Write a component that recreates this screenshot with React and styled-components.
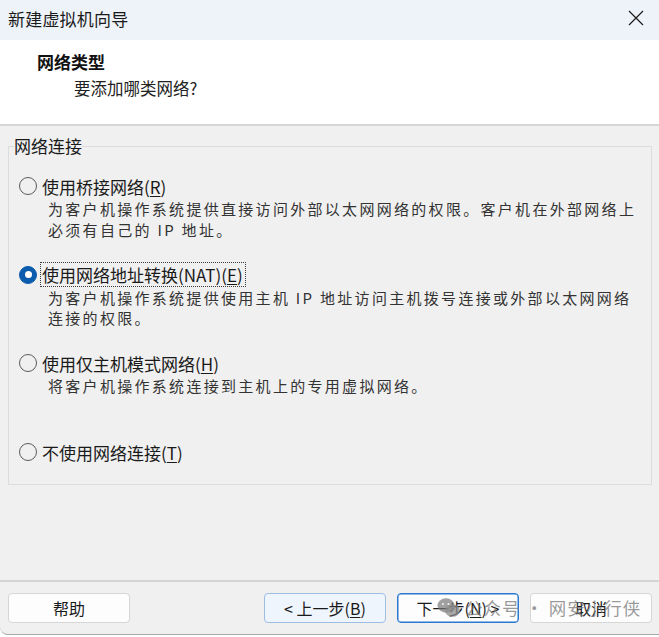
import React from "react"
import styled, { createGlobalStyle } from "styled-components"

const GlobalStyle = createGlobalStyle`
  html, body {
    margin: 0;
    padding: 0;
    background: #ffffff;
  }
  body {
    font-family: "Noto Sans CJK SC", "Noto Sans", "Liberation Sans", sans-serif;
    color: #1a1a1a;
  }
`

const Window = styled.div`
  position: relative;
  width: 659px;
  height: 635px;
  box-sizing: border-box;
  display: flex;
  flex-direction: column;
  background: #f0f0f0;
  border-bottom: 1px solid #a8a8a8;
  border-bottom-left-radius: 8px;
  overflow: hidden;
`

const TitleBar = styled.div`
  height: 40px;
  flex-shrink: 0;
  display: flex;
  align-items: center;
  justify-content: space-between;
  background: #eef2f9;
  padding-left: 8px;
`

const Title = styled.div`
  font-size: 17px;
  color: #1a1a1a;
  letter-spacing: 0.2px;
  margin-top: -4px;
`

const CloseButton = styled.div`
  width: 46px;
  height: 36px;
  display: flex;
  align-items: center;
  justify-content: center;
  margin-top: -4px;
`

const Header = styled.div`
  height: 86px;
  flex-shrink: 0;
  box-sizing: border-box;
  background: #ffffff;
  padding: 11px 0 0 37px;
  border-bottom: 2px solid #d6d6d6;
`

const HeaderTitle = styled.div`
  font-size: 17px;
  font-weight: 700;
  line-height: 22px;
  color: #111;
`

const HeaderSub = styled.div`
  font-size: 16.5px;
  line-height: 22px;
  margin: 4px 0 0 37px;
  color: #222;
`

const Body = styled.div`
  flex: 1;
  padding: 11px 7px 0 8px;
`

const GroupBox = styled.fieldset`
  margin: 0;
  height: 348px;
  box-sizing: border-box;
  border: 1px solid #dcdcdc;
  padding: 0 0 0 10px;
`

const Legend = styled.legend`
  padding: 0;
  margin-left: -5px;
  font-size: 17px;
  line-height: 18px;
  color: #1a1a1a;
`

const OptionList = styled.div`
  display: grid;
  grid-auto-rows: 88.7px;
  margin-top: 19px;
`

const Option = styled.div`
  display: flex;
  flex-direction: column;
`

const OptionRow = styled.label`
  display: flex;
  align-items: center;
  height: 24px;
  gap: 5px;
`

const Radio = styled.span`
  width: 18px;
  height: 18px;
  box-sizing: border-box;
  border-radius: 50%;
  flex-shrink: 0;
  display: flex;
  align-items: center;
  justify-content: center;
  border: 1px solid ${p => (p.$checked ? "#0b5cad" : "#5c5c5c")};
  background: ${p => (p.$checked ? "#0b5cad" : "transparent")};

  &::after {
    content: "";
    width: 7px;
    height: 7px;
    border-radius: 50%;
    background: #ffffff;
    display: ${p => (p.$checked ? "block" : "none")};
  }
`

const OptionLabel = styled.span`
  font-size: 17px;
  line-height: 23px;
  color: #1a1a1a;
  padding: 0 2px 0 1px;
  margin-left: -2px;
  border: 1px dotted ${p => (p.$focused ? "#3a3a3a" : "transparent")};
`

const Key = styled.span`
  text-decoration: underline;
  text-underline-offset: 2px;
`

const Description = styled.div`
  margin: 1px 0 0 29px;
  font-size: 15px;
  line-height: 20.5px;
  letter-spacing: 2.3px;
  color: #333;
  max-width: 600px;
`

const Footer = styled.div`
  height: 54px;
  flex-shrink: 0;
  box-sizing: border-box;
  border-top: 2px solid #d4d4d4;
  padding: 11px 7px 0 8px;
  display: flex;
  justify-content: space-between;
`

const ButtonGroup = styled.div`
  display: flex;
  gap: 11px;
`

const Button = styled.div`
  width: 122px;
  height: 30px;
  box-sizing: border-box;
  border-radius: 4px;
  display: flex;
  align-items: center;
  justify-content: center;
  font-size: 16px;
  color: #1a1a1a;
  background: ${p => (p.$variant === "hover" ? "#eef5fd" : "#fdfdfd")};
  border: 1px solid
    ${p =>
      p.$variant === "default"
        ? "#2a78cf"
        : p.$variant === "hover"
        ? "#9cbde3"
        : "#d6d6d6"};
  box-shadow: ${p => (p.$variant === "default" ? "inset 0 0 0 0.5px #2a78cf" : "none")};
`

const Watermark = styled.div`
  position: absolute;
  left: 437px;
  top: 595px;
  display: flex;
  align-items: center;
  gap: 4px;
  font-size: 17.5px;
  color: rgba(120, 120, 120, 0.75);
  letter-spacing: 1px;
  pointer-events: none;
`

const options = [
  {
    label: ["使用桥接网络(", "R", ")"],
    desc: "为客户机操作系统提供直接访问外部以太网网络的权限。客户机在外部网络上必须有自己的 IP 地址。",
  },
  {
    label: ["使用网络地址转换(NAT)(", "E", ")"],
    desc: "为客户机操作系统提供使用主机 IP 地址访问主机拨号连接或外部以太网网络连接的权限。",
    checked: true,
  },
  {
    label: ["使用仅主机模式网络(", "H", ")"],
    desc: "将客户机操作系统连接到主机上的专用虚拟网络。",
  },
  {
    label: ["不使用网络连接(", "T", ")"],
  },
]

function CloseIcon() {
  return (
    <svg width="16" height="16" viewBox="0 0 16 16">
      <path d="M1 1 L15 15 M15 1 L1 15" stroke="#1a1a1a" strokeWidth="1.2" />
    </svg>
  )
}

function WeChatIcon() {
  return (
    <svg width="24" height="22" viewBox="0 0 24 22" fill="rgba(120,120,120,0.7)">
      <ellipse cx="9" cy="8.5" rx="8.5" ry="7.2" />
      <ellipse cx="15.5" cy="13.5" rx="7.5" ry="6.3" fill="rgba(140,140,140,0.75)" />
      <circle cx="6" cy="7" r="1.1" fill="#f0f0f0" />
      <circle cx="11.5" cy="7" r="1.1" fill="#f0f0f0" />
    </svg>
  )
}

export default function App() {
  return (
    <>
      <GlobalStyle />
      <Window>
        <TitleBar>
          <Title>新建虚拟机向导</Title>
          <CloseButton>
            <CloseIcon />
          </CloseButton>
        </TitleBar>
        <Header>
          <HeaderTitle>网络类型</HeaderTitle>
          <HeaderSub>要添加哪类网络?</HeaderSub>
        </Header>
        <Body>
          <GroupBox>
            <Legend>网络连接</Legend>
            <OptionList>
              {options.map((o, i) => (
                <Option key={i}>
                  <OptionRow>
                    <Radio $checked={o.checked} />
                    <OptionLabel $focused={o.checked}>
                      {o.label[0]}
                      <Key>{o.label[1]}</Key>
                      {o.label[2]}
                    </OptionLabel>
                  </OptionRow>
                  {o.desc && <Description>{o.desc}</Description>}
                </Option>
              ))}
            </OptionList>
          </GroupBox>
        </Body>
        <Footer>
          <Button>帮助</Button>
          <ButtonGroup>
            <Button $variant="hover">
              &lt; 上一步(<Key>B</Key>)
            </Button>
            <Button $variant="default">
              下一步(<Key>N</Key>) &gt;
            </Button>
            <Button>取消</Button>
          </ButtonGroup>
        </Footer>
        <Watermark>
          <WeChatIcon />
          <span>公众号 · 网安小行侠</span>
        </Watermark>
      </Window>
    </>
  )
}
